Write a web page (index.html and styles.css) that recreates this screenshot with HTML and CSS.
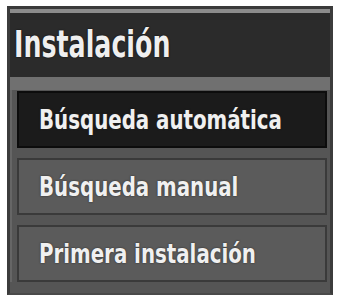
FILE: index.html
```html
<!DOCTYPE html>
<html>
<head>
<meta charset="utf-8">
<link rel="stylesheet" href="styles.css">
</head>
<body>
<div class="panel">
  <div class="header"><span class="title">Instalación</span></div>
  <div class="band"></div>
  <div class="list">
    <div class="item active"><span class="label">Búsqueda automática</span></div>
    <div class="item"><span class="label">Búsqueda manual</span></div>
    <div class="item"><span class="label">Primera instalación</span></div>
  </div>
</div>
</body>
</html>
```
FILE: styles.css
```css
html, body {
  margin: 0;
  padding: 0;
  background: #ffffff;
}
body {
  padding: 6px 4px 3px 7px;
  font-family: "DejaVu Sans Condensed", "DejaVu Sans", sans-serif;
  font-stretch: condensed;
}
.panel {
  width: 326px;
  height: 289px;
  box-sizing: border-box;
  background: #555555;
  border-top: 3px solid #3a3a3a;
  border-left: 3px solid #3c3c3c;
  border-right: 3px solid #3c3c3c;
  border-bottom: 2px solid #4a4a4a;
  display: flex;
  flex-direction: column;
}
.header {
  border-top: 4px solid #8c8c8c;
  background: #2b2b2b;
  height: 68px;
  box-sizing: border-box;
  padding: 11px 0 0 4px;
  white-space: nowrap;
}
.title {
  display: inline-block;
  color: #efefef;
  font-size: 38px;
  line-height: 40px;
  font-weight: bold;
  text-shadow: 0 0 2px #000;
  transform: scaleX(0.74);
  transform-origin: left center;
}
.band {
  height: 13px;
  background: #707070;
}
.list {
  display: flex;
  flex-direction: column;
  gap: 10px;
  padding: 1px 3px 0 5px;
  border-left: 2px solid #666;
}
.item {
  height: 57px;
  box-sizing: border-box;
  background: #5b5b5b;
  border: 2px solid #3a3a3a;
  color: #f0f0f0;
  font-size: 27px;
  font-weight: bold;
  line-height: 53px;
  padding-left: 20px;
  white-space: nowrap;
  text-shadow: 0 0 2px #222;
}
.label {
  display: inline-block;
  transform: scaleX(0.815);
  transform-origin: left center;
}
.item.active {
  background: #1b1b1b;
  border-color: #0c0c0c;
}
```
